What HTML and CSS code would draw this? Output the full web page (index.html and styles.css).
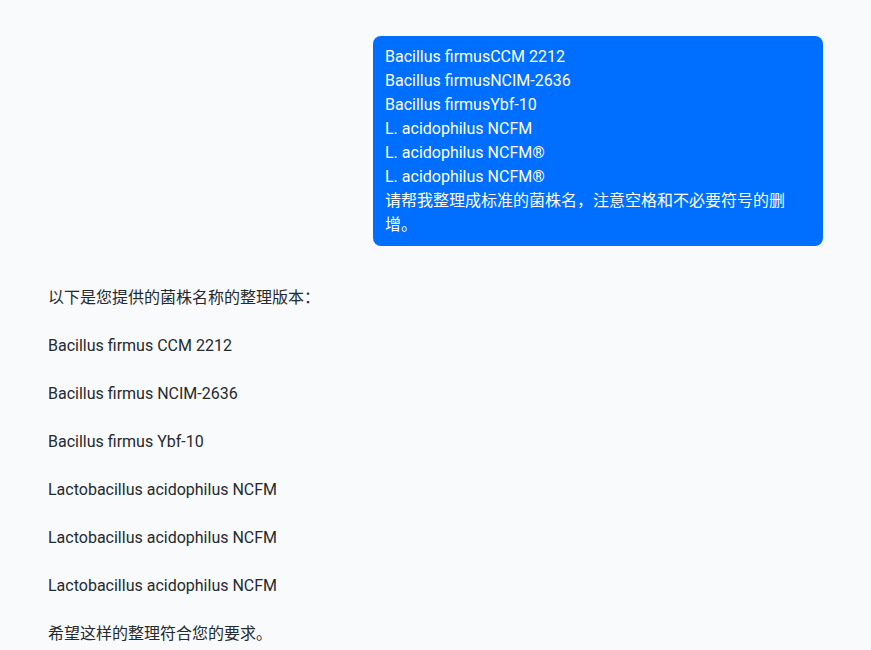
FILE: index.html
```html
<!DOCTYPE html>
<html lang="zh-CN">
<head>
<meta charset="utf-8">
<link rel="stylesheet" href="styles.css">
</head>
<body>
<main class="chat">
  <div class="row row-user">
    <div class="bubble">Bacillus firmusCCM 2212<br>Bacillus firmusNCIM-2636<br>Bacillus firmusYbf-10<br>L. acidophilus NCFM<br>L. acidophilus NCFM®<br>L. acidophilus NCFM®<br>请帮我整理成标准的菌株名，注意空格和不必要符号的删增。</div>
  </div>
  <div class="row row-bot">
    <div class="answer">
      <p>以下是您提供的菌株名称的整理版本：</p>
      <p>Bacillus firmus CCM 2212</p>
      <p>Bacillus firmus NCIM-2636</p>
      <p>Bacillus firmus Ybf-10</p>
      <p>Lactobacillus acidophilus NCFM</p>
      <p>Lactobacillus acidophilus NCFM</p>
      <p>Lactobacillus acidophilus NCFM</p>
      <p>希望这样的整理符合您的要求。</p>
    </div>
  </div>
</main>
</body>
</html>
```

FILE: styles.css
```css
html, body {
  margin: 0;
  padding: 0;
  background: #f9fafb;
}
body {
  font-family: Roboto, "Noto Sans CJK SC", sans-serif;
  font-size: 16px;
  line-height: 24px;
  color: #24292f;
}
.chat {
  padding: 36px 48px 0 48px;
  display: flex;
  flex-direction: column;
  gap: 40px;
}
.row {
  display: flex;
}
.row-user {
  justify-content: flex-end;
}
.bubble {
  max-width: 426px;
  padding: 9px 12px;
  background: #006eff;
  color: #ffffff;
  border-radius: 8px;
}
.answer p {
  margin: 0 0 24px 0;
}
```
